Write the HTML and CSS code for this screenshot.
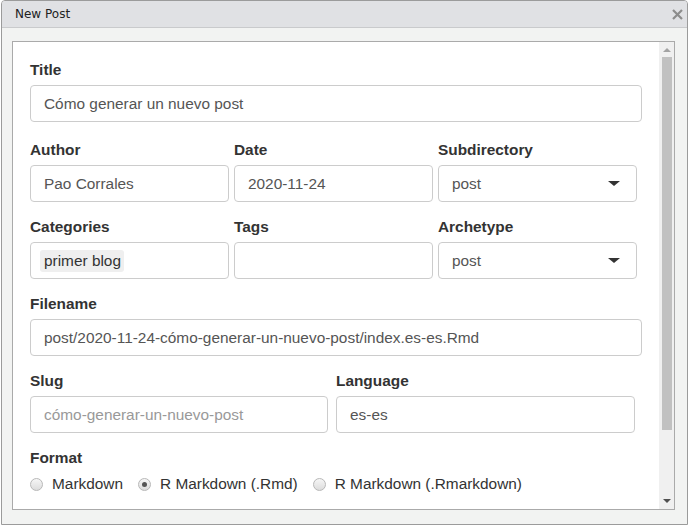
FILE: index.html
```html
<!DOCTYPE html>
<html>
<head>
<meta charset="utf-8">
<link rel="stylesheet" href="styles.css">
</head>
<body>
<div class="window">
  <div class="titlebar">
    <span class="title">New Post</span>
    <svg class="close" width="11" height="11" viewBox="0 0 11 11"><path d="M1 1 L10 10 M10 1 L1 10" stroke="#8c8c8c" stroke-width="2.2" fill="none"/></svg>
  </div>
  <div class="body">
    <div class="frame">
      <div class="content">
        <div class="group first">
          <label class="lbl">Title</label>
          <div class="input">Cómo generar un nuevo post</div>
        </div>
        <div class="row three">
          <div class="group">
            <label class="lbl">Author</label>
            <div class="input">Pao Corrales</div>
          </div>
          <div class="group">
            <label class="lbl">Date</label>
            <div class="input">2020-11-24</div>
          </div>
          <div class="group">
            <label class="lbl">Subdirectory</label>
            <div class="input select">post<span class="caret"></span></div>
          </div>
        </div>
        <div class="row three">
          <div class="group">
            <label class="lbl">Categories</label>
            <div class="input tags"><span class="tag">primer blog</span></div>
          </div>
          <div class="group">
            <label class="lbl">Tags</label>
            <div class="input"></div>
          </div>
          <div class="group">
            <label class="lbl">Archetype</label>
            <div class="input select">post<span class="caret"></span></div>
          </div>
        </div>
        <div class="group">
          <label class="lbl">Filename</label>
          <div class="input">post/2020-11-24-cómo-generar-un-nuevo-post/index.es-es.Rmd</div>
        </div>
        <div class="row two">
          <div class="group">
            <label class="lbl">Slug</label>
            <div class="input placeholder">cómo-generar-un-nuevo-post</div>
          </div>
          <div class="group">
            <label class="lbl">Language</label>
            <div class="input lang">es-es</div>
          </div>
        </div>
        <div class="group">
          <label class="lbl">Format</label>
          <div class="radios">
            <span class="opt"><span class="radio"></span>Markdown</span>
            <span class="opt"><span class="radio checked"></span>R Markdown (.Rmd)</span>
            <span class="opt"><span class="radio"></span>R Markdown (.Rmarkdown)</span>
          </div>
        </div>
      </div>
      <div class="scrollbar">
        <span class="arrow up"></span>
        <span class="thumb"></span>
        <span class="spacer"></span>
        <span class="arrow down"></span>
      </div>
    </div>
  </div>
</div>
</body>
</html>
```

FILE: styles.css
```css
html, body {
  margin: 0;
  padding: 0;
  background: #ffffff;
}

.window {
  box-sizing: border-box;
  width: 687px;
  height: 525px;
  margin-left: 1px;
  border: 1px solid #9b9b9b;
  border-radius: 4px 4px 0 0;
  background: #f2f3f2;
  display: flex;
  flex-direction: column;
  overflow: hidden;
}

.titlebar {
  height: 26px;
  flex: none;
  background: #e0e1e4;
  border-bottom: 1px solid #c9cacc;
  display: flex;
  align-items: center;
  justify-content: space-between;
  padding: 0 4px 0 13px;
  font-family: "DejaVu Sans", sans-serif;
  font-size: 12px;
  color: #222;
}

.close {
  display: block;
  margin-top: 1px;
}

.body {
  flex: 1;
  padding: 13px 12px 21px 10px;
  display: flex;
}

.frame {
  flex: 1;
  border: 1px solid #aaaaaa;
  background: #ffffff;
  display: flex;
  overflow: hidden;
}

.content {
  flex: 1;
  padding: 17px 17px 0 17px;
  font-family: "Liberation Sans", Arial, sans-serif;
  font-size: 15.4px;
  color: #333;
  overflow: hidden;
}

.group {
  margin-bottom: 14px;
}

.group.first {
  margin-bottom: 17px;
}

.lbl {
  display: block;
  font-weight: bold;
  line-height: 22px;
  margin-bottom: 4px;
  color: #333;
}

.input {
  box-sizing: border-box;
  height: 37px;
  border: 1px solid #cccccc;
  border-radius: 4px;
  padding: 0 13px;
  display: flex;
  align-items: center;
  color: #555;
  white-space: nowrap;
  overflow: hidden;
}

.row {
  display: grid;
}

.row.three {
  grid-template-columns: 1fr 1fr 1fr;
}

.row.two {
  grid-template-columns: 1fr 1fr;
}

.row .input {
  width: 97.5%;
}

.row .input.lang {
  width: 97.8%;
}

.placeholder {
  color: #999;
}

.select {
  justify-content: space-between;
  padding-right: 16px;
}

.caret {
  width: 0;
  height: 0;
  border-left: 6px solid transparent;
  border-right: 6px solid transparent;
  border-top: 5px solid #333;
}

.tags {
  padding-left: 9px;
}

.tag {
  background: #efefef;
  border-radius: 3px;
  padding: 2px 3px 2px 4px;
  color: #333;
}

.radios {
  display: flex;
  align-items: center;
  line-height: 22px;
  margin-top: 1px;
  color: #333;
}

.opt {
  display: flex;
  align-items: center;
  margin-right: 15px;
}

.radio {
  box-sizing: border-box;
  width: 13px;
  height: 13px;
  border-radius: 50%;
  border: 1px solid #b8b8b8;
  background: linear-gradient(#f6f6f6, #dcdcdc);
  margin-right: 9px;
  display: flex;
  align-items: center;
  justify-content: center;
}

.radio.checked::after {
  content: "";
  width: 5px;
  height: 5px;
  border-radius: 50%;
  background: #555;
}

.scrollbar {
  width: 15px;
  flex: none;
  background: #f0f0f0;
  display: flex;
  flex-direction: column;
  align-items: center;
}

.arrow {
  width: 0;
  height: 0;
  border-left: 4px solid transparent;
  border-right: 4px solid transparent;
}

.arrow.up {
  margin-top: 6px;
  border-bottom: 4px solid #a3a3a3;
}

.arrow.down {
  margin-bottom: 6px;
  border-top: 4px solid #505050;
}

.thumb {
  margin-top: 5px;
  width: 10px;
  height: 373px;
  background: #c1c1c1;
}

.spacer {
  flex: 1;
}
```
